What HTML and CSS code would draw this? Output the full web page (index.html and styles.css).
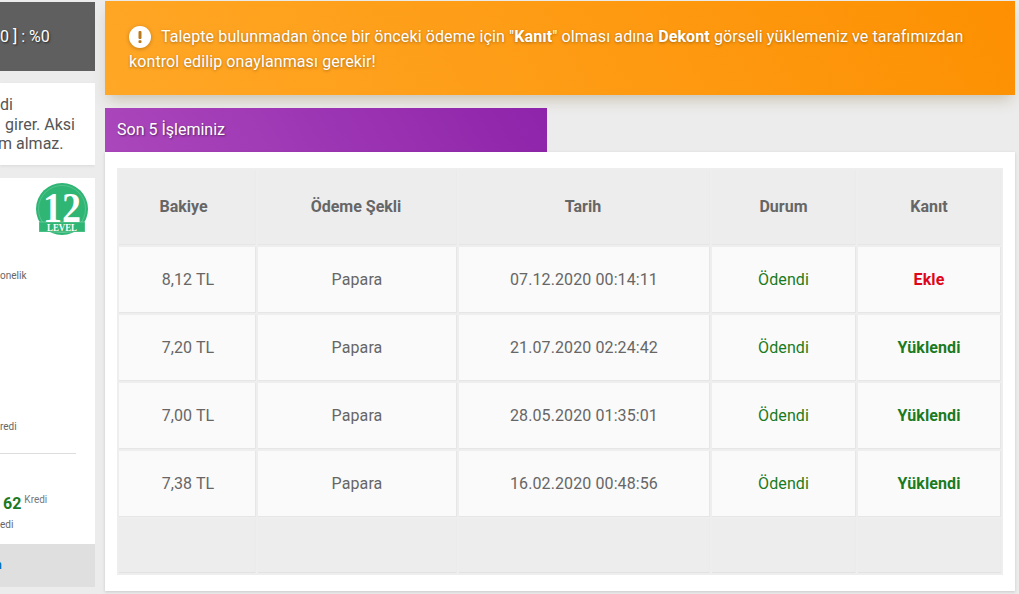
FILE: index.html
```html
<!DOCTYPE html>
<html lang="tr">
<head>
<meta charset="utf-8">
<title>Son 5 İşleminiz</title>
<link rel="stylesheet" href="styles.css">
</head>
<body>
<div class="page">
  <aside class="side">
    <div class="rate">0 ] : %0</div>
    <div class="note">
      <div class="note-a">di</div>
      <div class="note-b">girer. Aksi</div>
      <div class="note-c">m almaz.</div>
    </div>
    <div class="level-card">
      <div class="badge-row">
        <svg class="badge" width="52" height="52" viewBox="0 0 52 52">
          <circle cx="26" cy="26" r="26" fill="#2fb574"/>
          <circle cx="26" cy="26" r="23.5" fill="none" stroke="#fff" stroke-opacity=".18"/>
          <rect x="3" y="39" width="46" height="10" fill="#2fb574" stroke="#fff" stroke-opacity=".5" stroke-width=".5"/>
          <text class="badge-num" x="26" y="38.5" text-anchor="middle" textLength="38" lengthAdjust="spacingAndGlyphs">12</text>
          <text class="badge-lvl" x="26" y="47.5" text-anchor="middle" textLength="30" lengthAdjust="spacingAndGlyphs">LEVEL</text>
        </svg>
      </div>
      <div class="small onelik">onelik</div>
      <div class="small redi">redi</div>
      <div class="rule"></div>
      <div class="amount"><b>62</b><sup>Kredi</sup></div>
      <div class="small edi">edi</div>
      <div class="foot"><span>n</span></div>
    </div>
  </aside>
  <main class="main">
    <div class="alert">
      <p><svg class="alert-icon" width="22" height="22" viewBox="0 0 22 22"><circle cx="11" cy="11" r="11" fill="#fff"/><rect x="9.5" y="5" width="3" height="8" rx="1" fill="#b9791c"/><rect x="9.5" y="14.2" width="3" height="2.8" rx=".8" fill="#b9791c"/></svg>Talepte bulunmadan önce bir önceki ödeme için "<b>Kanıt</b>" olması adına <b>Dekont</b> görseli yüklemeniz ve tarafımızdan kontrol edilip onaylanması gerekir!</p>
    </div>
    <h2 class="title">Son 5 İşleminiz</h2>
    <section class="panel">
      <table class="tbl">
        <colgroup><col class="c1"><col class="c2"><col class="c3"><col class="c4"><col class="c5"></colgroup>
        <thead>
          <tr><th class="first">Bakiye</th><th class="nudge">Ödeme Şekli</th><th class="nudge">Tarih</th><th>Durum</th><th>Kanıt</th></tr>
        </thead>
        <tbody>
          <tr><td class="first">8,12 TL</td><td>Papara</td><td>07.12.2020 00:14:11</td><td class="ok">Ödendi</td><td class="no"><b>Ekle</b></td></tr>
          <tr><td class="first">7,20 TL</td><td>Papara</td><td>21.07.2020 02:24:42</td><td class="ok">Ödendi</td><td class="ok"><b>Yüklendi</b></td></tr>
          <tr><td class="first">7,00 TL</td><td>Papara</td><td>28.05.2020 01:35:01</td><td class="ok">Ödendi</td><td class="ok"><b>Yüklendi</b></td></tr>
          <tr><td class="first">7,38 TL</td><td>Papara</td><td>16.02.2020 00:48:56</td><td class="ok">Ödendi</td><td class="ok"><b>Yüklendi</b></td></tr>
        </tbody>
        <tfoot>
          <tr><th></th><th></th><th></th><th></th><th></th></tr>
        </tfoot>
      </table>
    </section>
  </main>
</div>
</body>
</html>
```
FILE: styles.css
```css
* { box-sizing: border-box; }
html, body { margin: 0; height: 594px; overflow: hidden; }
body {
  background: #ececec;
  font-family: Roboto, "Noto Sans", sans-serif;
  font-size: 16px;
  color: #555;
}
.page { display: flex; align-items: flex-start; gap: 10px; }

.side {
  width: 95px;
  flex: none;
  padding-top: 2px;
  display: flex;
  flex-direction: column;
  overflow: hidden;
}
.rate {
  height: 69px;
  flex: none;
  background: #5f5f5f;
  color: #fff;
  line-height: 69px;
  text-align: right;
  padding-right: 47px;
  white-space: nowrap;
  text-shadow: 1px 1px 2px rgba(0,0,0,.6);
}
.note {
  margin-top: 12px;
  height: 82px;
  flex: none;
  background: #fff;
  padding-top: 12px;
  line-height: 19.5px;
  white-space: nowrap;
  color: #555;
  box-shadow: 0 1px 3px rgba(0,0,0,.08);
}
.note-a { margin-left: 0; }
.note-b { margin-left: 5px; }
.note-c { margin-left: -2px; }

.level-card {
  margin-top: 13px;
  height: 409px;
  flex: none;
  background: #fff;
  display: flex;
  flex-direction: column;
  color: #666;
}
.badge-row { display: flex; justify-content: flex-end; padding: 5px 7px 0 0; flex: none; }
.badge { display: block; }
.badge-num { font-family: "Liberation Serif", serif; font-size: 43px; fill: #fff; font-weight: 700; }
.badge-lvl { font-family: "Liberation Serif", serif; font-size: 10px; fill: #fff; font-weight: 700; }
.small { font-size: 10px; line-height: 12px; white-space: nowrap; color: #666; flex: none; }
.onelik { margin-top: 35px; }
.redi { margin-top: 139px; }
.rule { margin-top: 20px; width: 76px; height: 1px; background: #ddd; flex: none; }
.amount { margin-top: 38px; margin-left: 3px; height: 24px; flex: none; line-height: 24px; font-size: 16px; white-space: nowrap; color: #1b7a1f; display: flex; }
.amount b { font-weight: 700; }
.amount sup { font-size: 10px; color: #777; line-height: 12px; margin-left: 3px; margin-top: 2px; }
.edi { margin-top: 3px; }
.foot {
  margin-top: 13px;
  height: 43px;
  background: #dfdfdf;
  line-height: 43px;
  font-size: 12px;
  font-weight: 700;
  color: #0a6fb5;
  flex: none;
  overflow: hidden;
}
.foot span { display: block; margin-left: -5px; }

.main { width: 910px; flex: none; padding-top: 1px; }
.alert {
  height: 94px;
  background: linear-gradient(60deg, #ffa726, #fd9002);
  box-shadow: 0 8px 14px -4px rgba(120,90,30,.3);
  color: #fff;
  padding: 23px 24px 0;
  text-shadow: 0 1px 3px rgba(0,0,0,.35);
}
.alert p { margin: 0; line-height: 25px; letter-spacing: .11px; }
.alert-icon { vertical-align: -6px; margin: -2px 10px 0 0; filter: drop-shadow(0 1px 2px rgba(0,0,0,.25)); }
.title {
  margin: 13px 0 0;
  width: 442px;
  height: 44px;
  background: linear-gradient(60deg, #ab47bc, #8e24aa);
  color: #fff;
  font-size: 16px;
  font-weight: 400;
  line-height: 44px;
  padding-left: 12px;
  text-shadow: 1px 1px 2px rgba(0,0,0,.45);
}
.panel {
  height: 439px;
  background: #fff;
  padding: 16px 12px 0 12px;
  box-shadow: 0 1px 3px rgba(0,0,0,.15);
}
.tbl {
  width: 886px;
  table-layout: fixed;
  border-collapse: separate;
  border-spacing: 2px;
  background: #eeeeee;
  text-align: center;
}
.c1 { width: 137px; }
.c2 { width: 199px; }
.c3 { width: 251px; }
.c4 { width: 144px; }
.c5 { width: 143px; }
.tbl thead th {
  height: 75px;
  background: #ededed;
  border-right: 1px solid #ebebeb;
  border-bottom: 1px solid #e6e6e6;
  color: #666;
  font-weight: 700;
  padding: 0 0 2px;
}
.tbl thead th.first { padding-right: 7px; }
.tbl thead th.nudge { padding-right: 2px; }
.tbl tbody td {
  height: 66px;
  background: #fafafa;
  border-right: 1px solid #e6e6e6;
  border-bottom: 1px solid #e6e6e6;
  color: #666;
  padding: 0;
  letter-spacing: .1px;
}
.tbl tbody td.first { padding-left: 2px; }
.tbl tfoot th {
  height: 54px;
  background: #ededed;
  border-right: 1px solid #ebebeb;
  border-bottom: 1px solid #e2e2e2;
  padding: 0;
}
.tbl td.ok { color: #1b7a1f; }
.tbl td.no { color: #e0061a; }
```
